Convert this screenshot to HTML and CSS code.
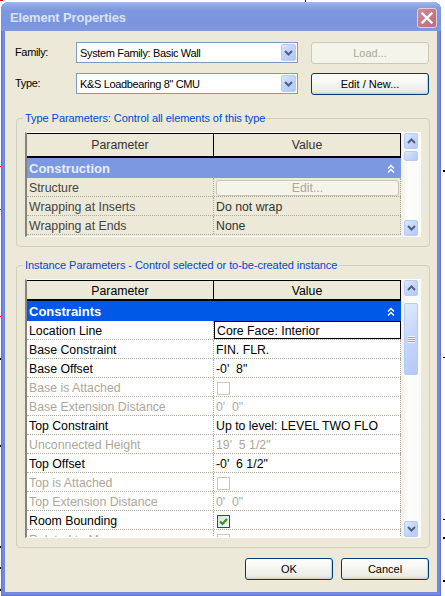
FILE: index.html
```html
<!DOCTYPE html>
<html>
<head>
<meta charset="utf-8">
<title>Element Properties</title>
<link rel="stylesheet" href="styles.css">
</head>
<body>
<div class="marks">
  <span class="mark m-red-corner"></span>
  <span class="mark m-top-line"></span>
  <span class="mark m-l1"></span>
  <span class="mark m-l2"></span>
  <span class="mark m-l3"></span>
  <span class="mark m-l4"></span>
  <span class="mark m-l5"></span>
  <span class="mark m-lr1"></span>
  <span class="mark m-lr2"></span>
  <span class="mark m-lr3"></span>
  <span class="mark m-r1"></span>
  <span class="mark m-r2"></span>
  <span class="mark m-r3"></span>
  <span class="mark m-r4"></span>
  <span class="mark m-r5"></span>
</div>
<div class="window">
  <div class="titlebar">
    <span class="title">Element Properties</span>
    <span class="close">
      <svg width="12" height="12" viewBox="0 0 12 12"><path d="M1.5 1.5 L10.5 10.5 M10.5 1.5 L1.5 10.5" stroke="#fff" stroke-width="2.3" stroke-linecap="square"/></svg>
    </span>
  </div>
  <div class="client">
    <div class="field-row">
      <span class="label">Family:</span>
      <div class="combo">
        <span class="combo-text">System Family: Basic Wall</span>
        <span class="combo-btn"><svg width="9" height="6" viewBox="0 0 9 6"><path d="M1 1 L4.5 4.5 L8 1" fill="none" stroke="#4d6185" stroke-width="2"/></svg></span>
      </div>
      <button class="btn btn-disabled" type="button">Load...</button>
    </div>
    <div class="field-row">
      <span class="label">Type:</span>
      <div class="combo">
        <span class="combo-text">K&amp;S Loadbearing 8" CMU</span>
        <span class="combo-btn"><svg width="9" height="6" viewBox="0 0 9 6"><path d="M1 1 L4.5 4.5 L8 1" fill="none" stroke="#4d6185" stroke-width="2"/></svg></span>
      </div>
      <button class="btn" type="button">Edit / New...</button>
    </div>

    <fieldset class="group group-type">
      <legend>Type Parameters: Control all elements of this type</legend>
      <div class="grid grid-type">
        <div class="table">
          <div class="header header-type">
            <div class="hcell">Parameter</div>
            <div class="hcell">Value</div>
          </div>
          <div class="grp-row grp-inactive">
            <span>Construction</span>
            <svg width="8" height="10" viewBox="0 0 8 10"><path d="M1 4.5 L4 1.5 L7 4.5 M1 8.5 L4 5.5 L7 8.5" fill="none" stroke="#fff" stroke-width="1.4"/></svg>
          </div>
          <div class="row"><div class="pcell">Structure</div><div class="vcell"><span class="cell-btn">Edit...</span></div></div>
          <div class="row"><div class="pcell">Wrapping at Inserts</div><div class="vcell">Do not wrap</div></div>
          <div class="row"><div class="pcell">Wrapping at Ends</div><div class="vcell">None</div></div>
        </div>
        <div class="scrollbar sb-type">
          <span class="sb-btn"><svg width="9" height="6" viewBox="0 0 9 6"><path d="M1 5 L4.5 1.5 L8 5" fill="none" stroke="#4d6185" stroke-width="2"/></svg></span>
          <span class="sb-thumb"></span>
          <span class="sb-btn sb-down"><svg width="9" height="6" viewBox="0 0 9 6"><path d="M1 1 L4.5 4.5 L8 1" fill="none" stroke="#4d6185" stroke-width="2"/></svg></span>
        </div>
      </div>
    </fieldset>

    <fieldset class="group group-inst">
      <legend>Instance Parameters - Control selected or to-be-created instance</legend>
      <div class="grid grid-inst">
        <div class="table">
          <div class="header header-inst">
            <div class="hcell">Parameter</div>
            <div class="hcell">Value</div>
          </div>
          <div class="grp-row grp-active">
            <span>Constraints</span>
            <svg width="8" height="10" viewBox="0 0 8 10"><path d="M1 4.5 L4 1.5 L7 4.5 M1 8.5 L4 5.5 L7 8.5" fill="none" stroke="#fff" stroke-width="1.4"/></svg>
          </div>
          <div class="row"><div class="pcell">Location Line</div><div class="vcell vcell-edit">Core Face: Interior</div></div>
          <div class="row"><div class="pcell">Base Constraint</div><div class="vcell">FIN. FLR.</div></div>
          <div class="row"><div class="pcell">Base Offset</div><div class="vcell">-0'&nbsp; 8"</div></div>
          <div class="row ro"><div class="pcell">Base is Attached</div><div class="vcell"><span class="chk"></span></div></div>
          <div class="row ro"><div class="pcell">Base Extension Distance</div><div class="vcell">0'&nbsp; 0"</div></div>
          <div class="row"><div class="pcell">Top Constraint</div><div class="vcell">Up to level: LEVEL TWO FLO</div></div>
          <div class="row ro"><div class="pcell">Unconnected Height</div><div class="vcell">19'&nbsp; 5 1/2"</div></div>
          <div class="row"><div class="pcell">Top Offset</div><div class="vcell">-0'&nbsp; 6 1/2"</div></div>
          <div class="row ro"><div class="pcell">Top is Attached</div><div class="vcell"><span class="chk"></span></div></div>
          <div class="row ro"><div class="pcell">Top Extension Distance</div><div class="vcell">0'&nbsp; 0"</div></div>
          <div class="row"><div class="pcell">Room Bounding</div><div class="vcell"><span class="chk chk-on"><svg width="11" height="11" viewBox="0 0 11 11"><path d="M2 5.5 L4.5 8 L9 3" fill="none" stroke="#21a121" stroke-width="2.2"/></svg></span></div></div>
          <div class="row ro"><div class="pcell">Related to Mass</div><div class="vcell"><span class="chk"></span></div></div>
        </div>
        <div class="scrollbar sb-inst">
          <span class="sb-btn"><svg width="9" height="6" viewBox="0 0 9 6"><path d="M1 5 L4.5 1.5 L8 5" fill="none" stroke="#4d6185" stroke-width="2"/></svg></span>
          <span class="sb-thumb sb-thumb-big"><span class="grip"></span></span>
          <span class="sb-btn sb-down"><svg width="9" height="6" viewBox="0 0 9 6"><path d="M1 1 L4.5 4.5 L8 1" fill="none" stroke="#4d6185" stroke-width="2"/></svg></span>
        </div>
      </div>
    </fieldset>

    <div class="actions">
      <button class="btn btn-action" type="button">OK</button>
      <button class="btn btn-action" type="button">Cancel</button>
    </div>
  </div>
</div>
</body>
</html>
```
FILE: styles.css
```css
* { box-sizing: border-box; }

html, body { margin: 0; padding: 0; }

body {
  width: 445px;
  height: 596px;
  overflow: hidden;
  background: #ffffff;
  position: relative;
  font-family: "Liberation Sans", Arial, sans-serif;
  font-size: 11px;
  color: #000;
}

/* background drawing marks behind the dialog */
.mark { position: absolute; display: block; background: #000; }
.m-red-corner { left: 0; top: 0; width: 3px; height: 1px; background: #e00; }
.m-top-line { left: 305px; top: 0; width: 1px; height: 3px; }
.m-l1 { left: 0; top: 166px; width: 3px; height: 1px; background: #e00; }
.m-l2 { left: 0; top: 209px; width: 3px; height: 1px; background: #e00; }
.m-l3 { left: 0; top: 316px; width: 2px; height: 1px; background: #e00; }
.m-l4 { left: 0; top: 358px; width: 2px; height: 2px; }
.m-l5 { left: 0; top: 445px; width: 2px; height: 2px; }
.m-lr1 { left: 0; top: 546px; width: 2px; height: 2px; }
.m-lr2 { left: 0; top: 567px; width: 2px; height: 2px; }
.m-lr3 { left: 0; top: 589px; width: 2px; height: 2px; }
.m-r1 { left: 443px; top: 170px; width: 2px; height: 2px; }
.m-r2 { left: 443px; top: 357px; width: 2px; height: 1px; }
.m-r3 { left: 443px; top: 519px; width: 2px; height: 1px; }
.m-r4 { left: 443px; top: 537px; width: 2px; height: 2px; }
.m-r5 { left: 443px; top: 580px; width: 2px; height: 2px; }

/* window frame */
.window {
  position: relative;
  margin: 2px 0 0 1px;
  width: 440px;
  height: 594px;
  display: flex;
  flex-direction: column;
  background: #7387df;
  border-radius: 8px 8px 0 0;
  box-shadow: inset 1px 0 0 #5f74d6, inset -1px 0 0 #5f74d6, inset 0 -1px 0 #5f74d6;
}

.titlebar {
  height: 29px;
  flex: 0 0 29px;
  display: flex;
  align-items: center;
  justify-content: space-between;
  padding: 0 4px 0 9px;
  border-radius: 8px 8px 0 0;
  background: linear-gradient(to bottom, #a6baf0 0, #8ea7e9 3px, #7d97e0 9px, #7a95df 22px, #8099e0 29px);
}

.title {
  font-family: "Liberation Sans", Arial, sans-serif;
  font-weight: bold;
  font-size: 13px;
  letter-spacing: -0.15px;
  color: #d9e3f8;
  margin-top: 1px;
}

.close {
  width: 20px;
  height: 20px;
  margin-top: 2px;
  border-radius: 3px;
  border: 1px solid #e9cdd5;
  background: linear-gradient(135deg, #cf8e9a 0, #c27a87 50%, #b86f7f 100%);
  display: flex;
  align-items: center;
  justify-content: center;
}

.client {
  flex: 1;
  margin: 0 4px 4px 4px;
  background: #ece9d8;
  padding: 11px 7px 0 10px;
  display: flex;
  flex-direction: column;
}

/* family / type rows */
.field-row {
  display: flex;
  align-items: flex-start;
  height: 22px;
}
.field-row + .field-row { margin-top: 9px; }

.label {
  width: 61px;
  line-height: 21px;
  letter-spacing: -0.35px;
}

.combo {
  width: 222px;
  height: 21px;
  border: 1px solid #7f9db9;
  background: #fff;
  display: flex;
  align-items: center;
  padding: 1px;
}
.combo-text {
  flex: 1;
  padding-left: 2px;
  letter-spacing: -0.35px;
  white-space: nowrap;
}
.combo-btn {
  width: 15px;
  height: 17px;
  border: 1px solid #b9cbf3;
  border-radius: 2px;
  background: linear-gradient(135deg, #dbe6fe 0, #c2d4fc 45%, #b1c6f7 100%);
  display: flex;
  align-items: center;
  justify-content: center;
}

.btn {
  font-family: "Liberation Sans", Arial, sans-serif;
  font-size: 11px;
  color: #000;
  padding: 0;
  margin: 0 0 0 13px;
  width: 118px;
  height: 22px;
  border: 1px solid #003c74;
  border-radius: 3px;
  background: linear-gradient(to bottom, #ffffff 0, #f7f7f3 40%, #ecebe5 85%, #d8d6cc 100%);
  box-shadow: inset -1px -1px 0 #d6d0c5;
}
.btn-disabled {
  border-color: #cac8bb;
  background: #f5f4ea;
  color: #aca899;
  box-shadow: none;
}

/* group boxes */
.group {
  margin: 0 0 0 1px;
  width: 414px;
  border: 1px solid #d0d0bf;
  border-radius: 4px;
  padding: 7px 8px 9px 8px;
  min-width: 0;
}
.group legend {
  padding: 0 2px;
  margin-left: -2px;
  line-height: 13px;
  color: #0046d5;
  font-size: 11px;
  letter-spacing: -0.06px;
}
.group-type { margin-top: 17px; }
.group-inst { margin-top: 12px; }

/* property grids */
.grid {
  display: flex;
  width: 396px;
  border-style: solid;
  border-width: 1px 1px 1px 2px;
  border-color: #ffffff #ffffff #ffffff #85837a;
}
.grid-type { height: 105px; background: #ece9d8; }
.grid-inst { height: 259px; background: #ffffff; }

.table {
  flex: 0 0 374px;
  width: 374px;
  overflow: hidden;
  font-size: 12.3px;
}

.header {
  display: flex;
  background: #ece9d8;
  border-top: 1px solid #000;
  border-bottom: 2px solid #000;
}
.header-type { height: 25px; color: #333; }
.header-inst { height: 21px; color: #000; }
.hcell {
  width: 187px;
  border-right: 1px solid #000;
  display: flex;
  align-items: center;
  justify-content: center;
}
.header-inst .hcell { padding-top: 2px; }

.grp-row {
  height: 20px;
  display: flex;
  align-items: center;
  justify-content: space-between;
  padding: 1px 6px 0 2px;
  font-weight: bold;
  font-size: 13px;
}
.grp-inactive { background: #7b98e0; color: #e8edf9; }
.grp-active { background: #0058e6; color: #ffffff; }

.row {
  display: flex;
  height: 19px;
  border-bottom: 1px dotted #aca899;
}
.pcell, .vcell {
  width: 187px;
  border-right: 1px dotted #aca899;
  padding: 1px 0 0 2px;
  display: flex;
  align-items: center;
  white-space: nowrap;
  overflow: hidden;
}
.grid-inst .pcell, .grid-inst .vcell { padding-top: 2px; }
.grid-type .row { color: #444; }
.grid-type .vcell { color: #333; }
.row.ro { color: #aca899; }

.grid-inst .vcell-edit {
  border: 1px solid #000;
  padding: 1px 0 0 2px;
}

.grid-type .vcell:has(.cell-btn) { padding-top: 0; }
.cell-btn {
  flex: 1;
  height: 16px;
  margin: 1px 1px 0 0;
  border: 1px solid #c9c7ba;
  border-radius: 3px;
  background: #f5f4ea;
  color: #aca899;
  display: flex;
  align-items: center;
  justify-content: center;
}

.chk {
  width: 13px;
  height: 13px;
  margin-left: 1px;
  border: 1px solid #cac8bb;
  background: #fff;
  display: flex;
  align-items: center;
  justify-content: center;
}
.chk-on {
  border-color: #1c5180;
  background: linear-gradient(135deg, #dcdcd7 0, #ffffff 100%);
}

/* scrollbars */
.scrollbar {
  flex: 0 0 19px;
  display: flex;
  flex-direction: column;
  padding: 0 2px 0 3px;
  background: linear-gradient(to right, #f1efe6 0, #fdfdfb 40%, #fbfbf8 100%);
}
.sb-btn, .sb-thumb {
  width: 14px;
  border: 1px solid #b7caf3;
  border-radius: 2px;
  background: linear-gradient(135deg, #e0eafe 0, #c6d7fc 45%, #b4c9f7 100%);
  display: flex;
  align-items: center;
  justify-content: center;
}
.sb-btn { height: 16px; }
.sb-down { margin-top: auto; }
.sb-type .sb-thumb { margin-top: 2px; height: 10px; }
.sb-inst .sb-thumb { margin-top: 7px; height: 72px; }
.grip {
  width: 7px;
  height: 7px;
  background: repeating-linear-gradient(to bottom, #eef3fe 0, #eef3fe 1px, #8ca4e0 1px, #8ca4e0 2px);
}

/* OK / Cancel */
.actions {
  display: flex;
  justify-content: flex-end;
  gap: 8px;
  margin: 10px 1px 0 0;
}
.btn-action {
  margin: 0;
  width: 88px;
  height: 22px;
}
```
